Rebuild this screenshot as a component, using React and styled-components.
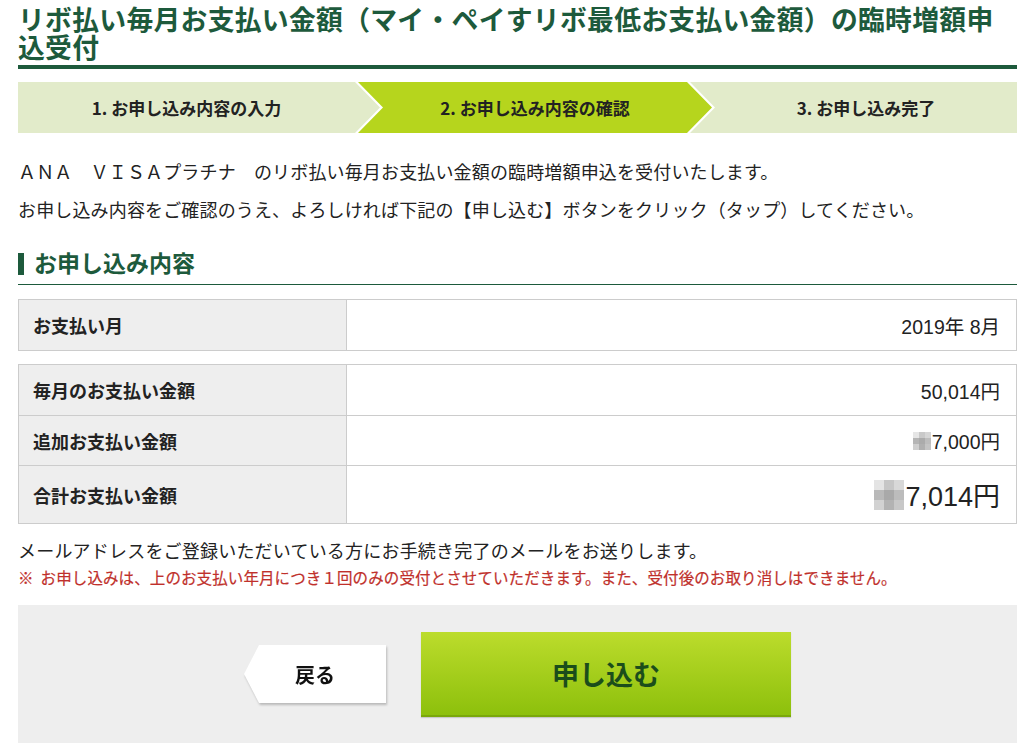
import React from 'react';
import styled, { createGlobalStyle } from 'styled-components';

const GlobalStyle = createGlobalStyle`
	*, *::before, *::after {
		box-sizing: border-box;
	}
	body {
		margin: 0;
		background: #fff;
		font-family: 'Noto Sans CJK JP', 'Noto Sans', sans-serif;
		color: #222;
	}
`;

const Page = styled.div`
	width: 1035px;
	padding: 0 18px;
`;

const Title = styled.h1`
	margin: 5px 0 0;
	padding-bottom: 4px;
	border-bottom: 4px solid #1d5a3c;
	font-size: 26.8px;
	letter-spacing: 0.3px;
	line-height: 28px;
	font-weight: 700;
	color: #1d5a3c;
`;

const Steps = styled.div`
	display: flex;
	height: 51px;
	margin-top: 13px;
`;

const Step = styled.div`
	flex: ${({ $width }) => ($width ? `0 0 ${$width}px` : '1')};
	margin-left: ${({ $first }) => ($first ? '0' : '-22px')};
	display: flex;
	align-items: center;
	justify-content: center;
	padding-left: ${({ $first }) => ($first ? '0' : '25px')};
	padding-right: ${({ $last }) => ($last ? '0' : '25px')};
	background: ${({ $active }) => ($active ? '#b6d51d' : '#e2ebca')};
	font-size: 17px;
	font-weight: 700;
	color: #222;
	clip-path: ${({ $first, $last }) => {
		if ($first) return 'polygon(0 0, calc(100% - 25px) 0, 100% 50%, calc(100% - 25px) 100%, 0 100%)';
		if ($last) return 'polygon(0 0, 100% 0, 100% 100%, 0 100%, 25px 50%)';
		return 'polygon(0 0, calc(100% - 25px) 0, 100% 50%, calc(100% - 25px) 100%, 0 100%, 25px 50%)';
	}};
`;

const Intro = styled.p`
	margin: 19px 0 0;
	font-size: 18px;
	letter-spacing: 0.15px;
	line-height: 38px;
`;

const SectionHeading = styled.h2`
	display: flex;
	align-items: center;
	gap: 10px;
	margin: 20px 0 0;
	padding-bottom: 9px;
	border-bottom: 1px solid #1d5a3c;
	font-size: 23px;
	line-height: 26px;
	font-weight: 700;
	color: #1d5a3c;

	&::before {
		content: '';
		width: 6px;
		height: 22px;
		margin-top: 5px;
		background: #1d5a3c;
	}
`;

const Table = styled.div`
	margin-top: ${({ $gap }) => $gap}px;
	border: 1px solid #ccc;
`;

const Row = styled.div`
	display: grid;
	grid-template-columns: 328px 1fr;
	min-height: ${({ $tall }) => ($tall ? 58 : 50)}px;
	& + & {
		border-top: 1px solid #ccc;
	}
`;

const Label = styled.div`
	display: flex;
	align-items: center;
	padding-left: 14px;
	background: #eee;
	border-right: 1px solid #ccc;
	font-size: 18px;
	font-weight: 700;
`;

const Value = styled.div`
	display: flex;
	align-items: center;
	justify-content: flex-end;
	padding-right: 16px;
	font-family: 'Liberation Sans', 'Noto Sans CJK JP', sans-serif;
	font-size: ${({ $large }) => ($large ? '27px' : '19.5px')};
	color: #222;
`;

const Mosaic = styled.span`
	display: inline-grid;
	grid-template-columns: repeat(3, ${({ $cell }) => $cell}px);
	grid-auto-rows: ${({ $cell }) => $cell}px;
	margin-right: 1px;
`;

const Cell = styled.span`
	background: ${({ $shade }) => $shade};
`;

const Note = styled.p`
	margin: ${({ $first }) => ($first ? '12px' : '0')} 0 0;
	font-size: ${({ $warn }) => ($warn ? '15.5px' : '18px')};
	letter-spacing: ${({ $warn }) => ($warn ? '0.1px' : '0.2px')};
	line-height: ${({ $warn }) => ($warn ? '26px' : '28px')};
	color: ${({ $warn }) => ($warn ? '#c0302b' : '#222')};
	-webkit-text-stroke: ${({ $warn }) => ($warn ? '0.2px #c0302b' : '0')};
`;

const Mark = styled.span`
	margin-right: 7px;
`;

const ButtonArea = styled.div`
	display: flex;
	align-items: center;
	justify-content: center;
	gap: 35px;
	height: 138px;
	margin-top: 15px;
	background: #eee;
`;

const BackWrap = styled.div`
	filter: drop-shadow(1px 2px 1px rgba(0, 0, 0, 0.22));
`;

const BackButton = styled.button`
	display: flex;
	align-items: center;
	justify-content: center;
	width: 142px;
	height: 58px;
	padding: 0;
	border: none;
	background: #fff;
	font-family: inherit;
	font-size: 20px;
	font-weight: 700;
	color: #111;
	cursor: pointer;
	clip-path: polygon(15px 0, 100% 0, 100% 100%, 15px 100%, 0 50%);
`;

const SubmitButton = styled.button`
	width: 370px;
	height: 85px;
	border: none;
	border-bottom: 2px solid #7aa80a;
	background: linear-gradient(#bcdc2c, #8dc00c);
	box-shadow: 0 1px 1px rgba(0, 0, 0, 0.15);
	font-family: inherit;
	font-size: 27px;
	font-weight: 700;
	color: #1b4d1b;
	cursor: pointer;
`;

const smallMosaic = ['#e6e6e6', '#c9c9c9', '#d6d6d6', '#b5b5b5', '#ababab', '#bdbdbd', '#cfcfcf', '#b0b0b0', '#c4c4c4'];
const largeMosaic = ['#e4e4e4', '#c6c6c6', '#d8d8d8', '#b9b9b9', '#a9a9a9', '#bcbcbc', '#d2d2d2', '#b3b3b3', '#c8c8c8'];

const Blur = ({ cells, size }) => (
	<Mosaic $cell={size}>
		{cells.map((c, i) => (
			<Cell key={i} $shade={c} />
		))}
	</Mosaic>
);

const App = () => (
	<Page>
		<GlobalStyle />
		<Title>
			リボ払い毎月お支払い金額（マイ・ペイすリボ最低お支払い金額）の臨時増額申
			<br />
			込受付
		</Title>

		<Steps>
			<Step $first $width={362}>1. お申し込み内容の入力</Step>
			<Step $active $width={354}>2. お申し込み内容の確認</Step>
			<Step $last>3. お申し込み完了</Step>
		</Steps>

		<Intro>
			ＡＮＡ　ＶＩＳＡプラチナ　のリボ払い毎月お支払い金額の臨時増額申込を受付いたします。
			<br />
			お申し込み内容をご確認のうえ、よろしければ下記の【申し込む】ボタンをクリック（タップ）してください。
		</Intro>

		<SectionHeading>お申し込み内容</SectionHeading>

		<Table $gap={14}>
			<Row>
				<Label>お支払い月</Label>
				<Value>2019年 8月</Value>
			</Row>
		</Table>

		<Table $gap={13}>
			<Row>
				<Label>毎月のお支払い金額</Label>
				<Value>50,014円</Value>
			</Row>
			<Row>
				<Label>追加お支払い金額</Label>
				<Value>
					<Blur cells={smallMosaic} size={6} />
					7,000円
				</Value>
			</Row>
			<Row $tall>
				<Label>合計お支払い金額</Label>
				<Value $large>
					<Blur cells={largeMosaic} size={10} />
					7,014円
				</Value>
			</Row>
		</Table>

		<Note $first>メールアドレスをご登録いただいている方にお手続き完了のメールをお送りします。</Note>
		<Note $warn>
			<Mark>※</Mark>お申し込みは、上のお支払い年月につき１回のみの受付とさせていただきます。また、受付後のお取り消しはできません。
		</Note>

		<ButtonArea>
			<BackWrap>
				<BackButton type="button">戻る</BackButton>
			</BackWrap>
			<SubmitButton type="button">申し込む</SubmitButton>
		</ButtonArea>
	</Page>
);

export default App;
